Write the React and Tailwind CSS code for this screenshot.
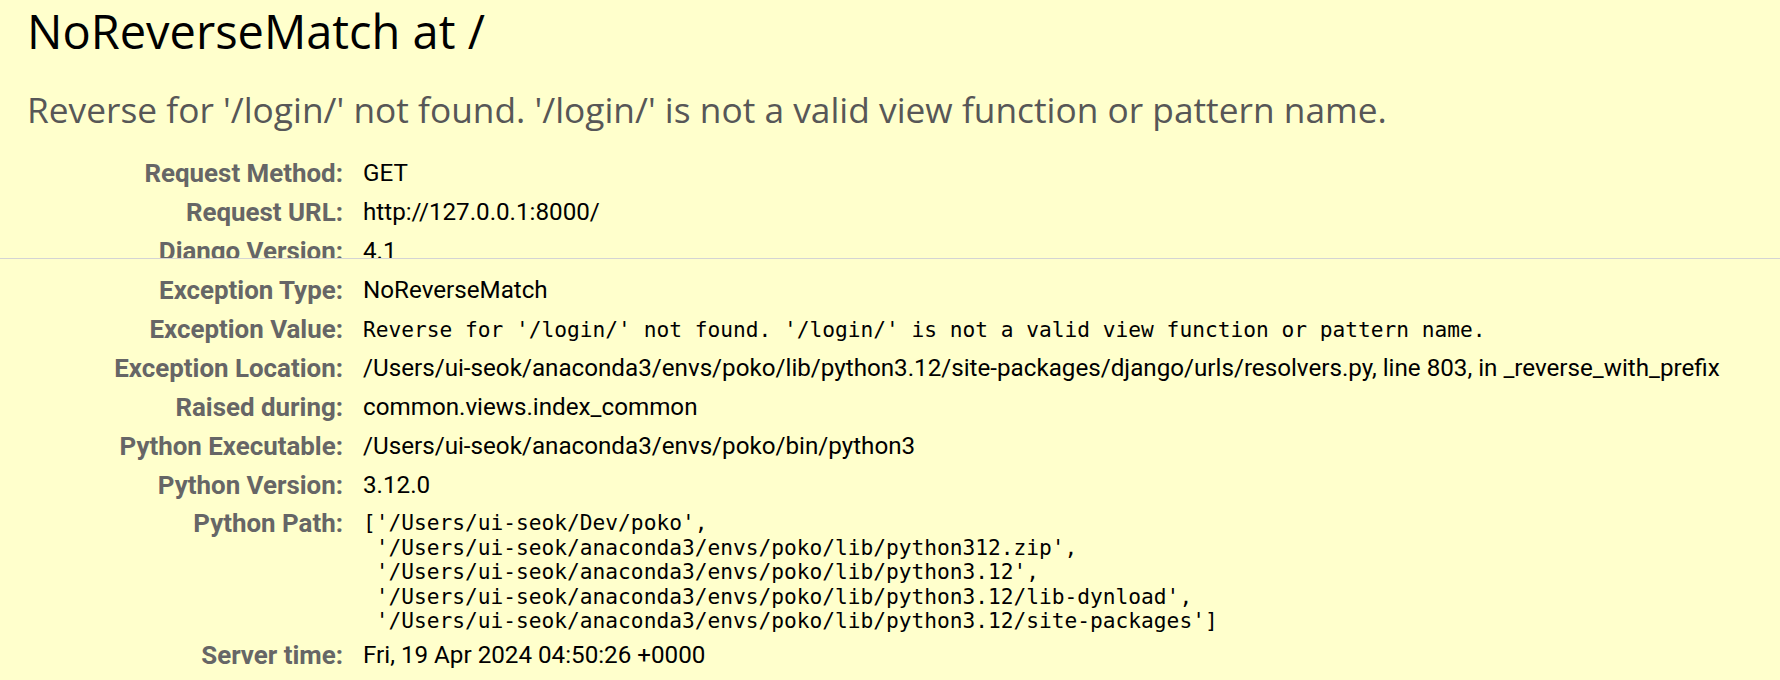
import React from "react";

const pythonPath = [
  "['/Users/ui-seok/Dev/poko',",
  " '/Users/ui-seok/anaconda3/envs/poko/lib/python312.zip',",
  " '/Users/ui-seok/anaconda3/envs/poko/lib/python3.12',",
  " '/Users/ui-seok/anaconda3/envs/poko/lib/python3.12/lib-dynload',",
  " '/Users/ui-seok/anaconda3/envs/poko/lib/python3.12/site-packages']",
];

function Row({ label, children }) {
  return (
    <div className="flex h-[39px] items-center">
      <div className="w-[343px] shrink-0 text-right font-['Roboto',sans-serif] text-[25.9px] font-bold text-[#666] whitespace-nowrap">
        {label}:
      </div>
      <div className="pl-[20px] font-['Roboto',sans-serif] text-[24.2px] text-black whitespace-nowrap">
        {children}
      </div>
    </div>
  );
}

function Mono({ children }) {
  return (
    <span className="font-['DejaVu_Sans_Mono',monospace] text-[21.2px]">{children}</span>
  );
}

export default function App() {
  return (
    <div className="w-[1780px] h-[680px] overflow-hidden bg-[#ffffcc]">
      {/* header part, cut off by the line */}
      <div className="h-[258px] overflow-hidden">
        <h1 className="pt-[2px] pl-[27px] font-['Open_Sans',sans-serif] text-[47px] leading-[59px] text-black">
          NoReverseMatch at /
        </h1>
        <div className="mt-[24.5px] pl-[27px] font-['Open_Sans',sans-serif] text-[35.3px] leading-[47px] text-[#575757] whitespace-nowrap">
          Reverse for '/login/' not found. '/login/' is not a valid view function or pattern name.
        </div>
        <div className="mt-[21.5px]">
          <Row label="Request Method">GET</Row>
          <Row label="Request URL">http://127.0.0.1:8000/</Row>
          <Row label="Django Version">4.1</Row>
        </div>
      </div>

      <div className="border-t border-[#d4d4d4] pt-[12px]">
        <Row label="Exception Type">NoReverseMatch</Row>
        <Row label="Exception Value">
          <Mono>Reverse for '/login/' not found. '/login/' is not a valid view function or pattern name.</Mono>
        </Row>
        <Row label="Exception Location">
          /Users/ui-seok/anaconda3/envs/poko/lib/python3.12/site-packages/django/urls/resolvers.py, line 803, in _reverse_with_prefix
        </Row>
        <Row label="Raised during">common.views.index_common</Row>
        <Row label="Python Executable">/Users/ui-seok/anaconda3/envs/poko/bin/python3</Row>
        <Row label="Python Version">3.12.0</Row>

        <div className="flex pb-[2px]">
          <div className="w-[343px] shrink-0 text-right font-['Roboto',sans-serif] text-[25.9px] leading-[37px] font-bold text-[#666]">
            Python Path:
          </div>
          <pre className="pl-[20px] pt-[6px] font-['DejaVu_Sans_Mono',monospace] text-[21.2px] leading-[24.5px] text-black">
            {pythonPath.join("\n")}
          </pre>
        </div>

        <Row label="Server time">Fri, 19 Apr 2024 04:50:26 +0000</Row>
      </div>
    </div>
  );
}
